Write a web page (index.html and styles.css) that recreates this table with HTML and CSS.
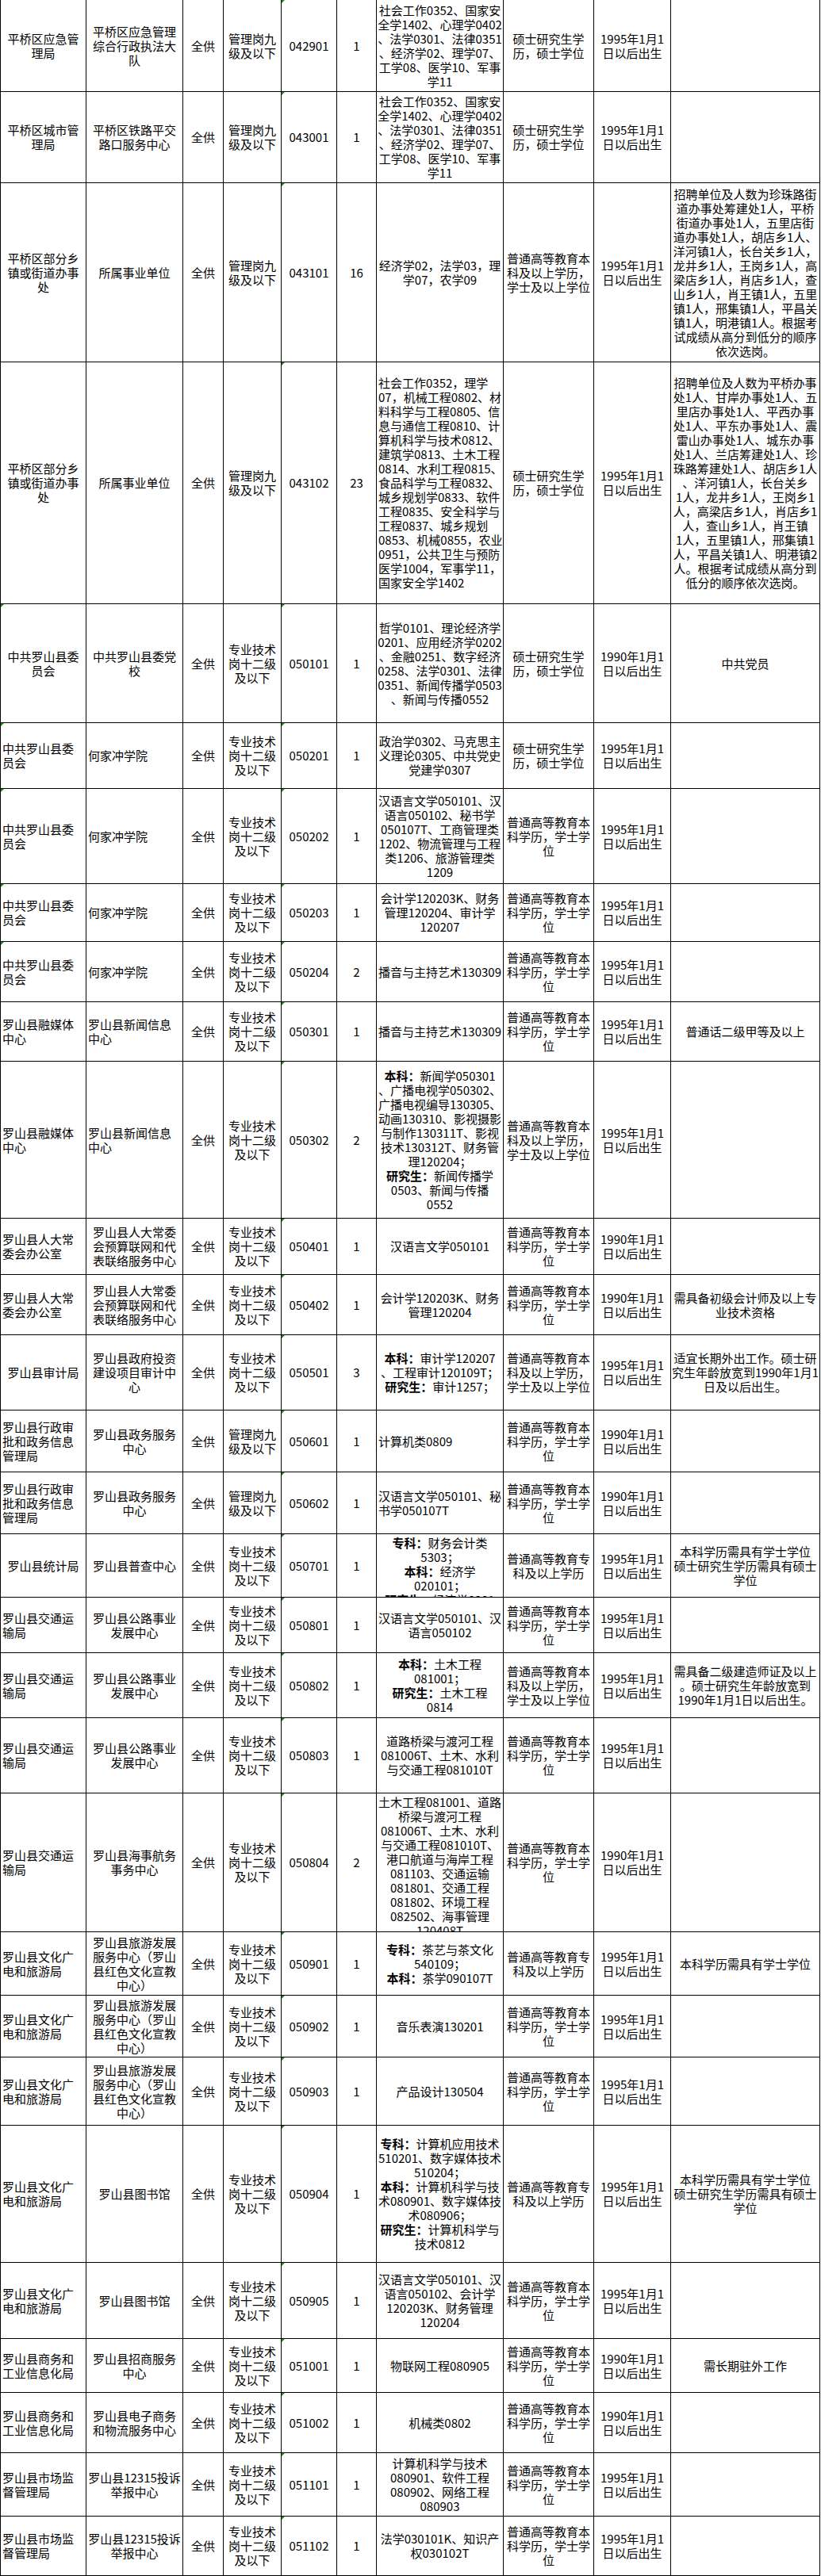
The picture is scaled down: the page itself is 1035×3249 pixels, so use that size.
FILE: index.html
```html
<!DOCTYPE html>
<html lang="zh-CN">
<head>
<meta charset="utf-8">
<title>招聘岗位表</title>
<link rel="stylesheet" href="styles.css">
</head>
<body>
<div class="sheet">

<div class="row h116">
 <div class="c">平桥区应急管<br>理局</div>
 <div class="c">平桥区应急管理<br>综合行政执法大<br>队</div>
 <div class="c">全供</div>
 <div class="c">管理岗九<br>级及以下</div>
 <div class="c g">042901</div>
 <div class="c">1</div>
 <div class="c">社会工作0352、国家安<br>全学1402、心理学0402<br>、法学0301、法律0351<br>、经济学02、理学07、<br>工学08、医学10、军事<br>学11</div>
 <div class="c">硕士研究生学<br>历，硕士学位</div>
 <div class="c">1995年1月1<br>日以后出生</div>
 <div class="c"></div>
</div>

<div class="row h115">
 <div class="c">平桥区城市管<br>理局</div>
 <div class="c">平桥区铁路平交<br>路口服务中心</div>
 <div class="c">全供</div>
 <div class="c">管理岗九<br>级及以下</div>
 <div class="c g">043001</div>
 <div class="c">1</div>
 <div class="c">社会工作0352、国家安<br>全学1402、心理学0402<br>、法学0301、法律0351<br>、经济学02、理学07、<br>工学08、医学10、军事<br>学11</div>
 <div class="c">硕士研究生学<br>历，硕士学位</div>
 <div class="c">1995年1月1<br>日以后出生</div>
 <div class="c"></div>
</div>

<div class="row h226">
 <div class="c">平桥区部分乡<br>镇或街道办事<br>处</div>
 <div class="c">所属事业单位</div>
 <div class="c">全供</div>
 <div class="c">管理岗九<br>级及以下</div>
 <div class="c g">043101</div>
 <div class="c">16</div>
 <div class="c">经济学02，法学03，理<br>学07，农学09</div>
 <div class="c">普通高等教育本<br>科及以上学历，<br>学士及以上学位</div>
 <div class="c">1995年1月1<br>日以后出生</div>
 <div class="c">招聘单位及人数为珍珠路街<br>道办事处筹建处1人，平桥<br>街道办事处1人，五里店街<br>道办事处1人，胡店乡1人、<br>洋河镇1人，长台关乡1人，<br>龙井乡1人，王岗乡1人，高<br>梁店乡1人，肖店乡1人，查<br>山乡1人，肖王镇1人，五里<br>镇1人，邢集镇1人，平昌关<br>镇1人，明港镇1人。根据考<br>试成绩从高分到低分的顺序<br>依次选岗。</div>
</div>

<div class="row h305">
 <div class="c">平桥区部分乡<br>镇或街道办事<br>处</div>
 <div class="c">所属事业单位</div>
 <div class="c">全供</div>
 <div class="c">管理岗九<br>级及以下</div>
 <div class="c g">043102</div>
 <div class="c">23</div>
 <div class="c l">社会工作0352，理学<br>07，机械工程0802、材<br>料科学与工程0805、信<br>息与通信工程0810、计<br>算机科学与技术0812、<br>建筑学0813、土木工程<br>0814、水利工程0815、<br>食品科学与工程0832、<br>城乡规划学0833、软件<br>工程0835、安全科学与<br>工程0837、城乡规划<br>0853、机械0855，农业<br>0951，公共卫生与预防<br>医学1004，军事学11，<br>国家安全学1402</div>
 <div class="c">硕士研究生学<br>历，硕士学位</div>
 <div class="c">1995年1月1<br>日以后出生</div>
 <div class="c">招聘单位及人数为平桥办事<br>处1人、甘岸办事处1人、五<br>里店办事处1人、平西办事<br>处1人、平东办事处1人、震<br>雷山办事处1人、城东办事<br>处1人、兰店筹建处1人、珍<br>珠路筹建处1人、胡店乡1人<br>、洋河镇1人，长台关乡<br>1人，龙井乡1人，王岗乡1<br>人，高梁店乡1人，肖店乡1<br>人，查山乡1人，肖王镇<br>1人，五里镇1人，邢集镇1<br>人，平昌关镇1人、明港镇2<br>人。根据考试成绩从高分到<br>低分的顺序依次选岗。</div>
</div>

<div class="row h150">
 <div class="c g">中共罗山县委<br>员会</div>
 <div class="c">中共罗山县委党<br>校</div>
 <div class="c">全供</div>
 <div class="c">专业技术<br>岗十二级<br>及以下</div>
 <div class="c g">050101</div>
 <div class="c">1</div>
 <div class="c">哲学0101、理论经济学<br>0201、应用经济学0202<br>、金融0251、数字经济<br>0258、法学0301、法律<br>0351、新闻传播学0503<br>、新闻与传播0552</div>
 <div class="c">硕士研究生学<br>历，硕士学位</div>
 <div class="c">1990年1月1<br>日以后出生</div>
 <div class="c">中共党员</div>
</div>

<div class="row h83">
 <div class="c l g">中共罗山县委<br>员会</div>
 <div class="c l">何家冲学院</div>
 <div class="c">全供</div>
 <div class="c">专业技术<br>岗十二级<br>及以下</div>
 <div class="c g">050201</div>
 <div class="c">1</div>
 <div class="c">政治学0302、马克思主<br>义理论0305、中共党史<br>党建学0307</div>
 <div class="c">硕士研究生学<br>历，硕士学位</div>
 <div class="c">1995年1月1<br>日以后出生</div>
 <div class="c"></div>
</div>

<div class="row h120">
 <div class="c l g">中共罗山县委<br>员会</div>
 <div class="c l">何家冲学院</div>
 <div class="c">全供</div>
 <div class="c">专业技术<br>岗十二级<br>及以下</div>
 <div class="c g">050202</div>
 <div class="c">1</div>
 <div class="c">汉语言文学050101、汉<br>语言050102、秘书学<br>050107T、工商管理类<br>1202、物流管理与工程<br>类1206、旅游管理类<br>1209</div>
 <div class="c">普通高等教育本<br>科学历，学士学<br>位</div>
 <div class="c">1995年1月1<br>日以后出生</div>
 <div class="c"></div>
</div>

<div class="row h73">
 <div class="c l g">中共罗山县委<br>员会</div>
 <div class="c l">何家冲学院</div>
 <div class="c">全供</div>
 <div class="c">专业技术<br>岗十二级<br>及以下</div>
 <div class="c g">050203</div>
 <div class="c">1</div>
 <div class="c">会计学120203K、财务<br>管理120204、审计学<br>120207</div>
 <div class="c">普通高等教育本<br>科学历，学士学<br>位</div>
 <div class="c">1995年1月1<br>日以后出生</div>
 <div class="c"></div>
</div>

<div class="row h76">
 <div class="c l g">中共罗山县委<br>员会</div>
 <div class="c l">何家冲学院</div>
 <div class="c">全供</div>
 <div class="c">专业技术<br>岗十二级<br>及以下</div>
 <div class="c g">050204</div>
 <div class="c">2</div>
 <div class="c">播音与主持艺术130309</div>
 <div class="c">普通高等教育本<br>科学历，学士学<br>位</div>
 <div class="c">1995年1月1<br>日以后出生</div>
 <div class="c"></div>
</div>

<div class="row h75">
 <div class="c l">罗山县融媒体<br>中心</div>
 <div class="c l">罗山县新闻信息<br>中心</div>
 <div class="c">全供</div>
 <div class="c">专业技术<br>岗十二级<br>及以下</div>
 <div class="c g">050301</div>
 <div class="c">1</div>
 <div class="c">播音与主持艺术130309</div>
 <div class="c">普通高等教育本<br>科学历，学士学<br>位</div>
 <div class="c">1995年1月1<br>日以后出生</div>
 <div class="c">普通话二级甲等及以上</div>
</div>

<div class="row h198">
 <div class="c l">罗山县融媒体<br>中心</div>
 <div class="c l">罗山县新闻信息<br>中心</div>
 <div class="c">全供</div>
 <div class="c">专业技术<br>岗十二级<br>及以下</div>
 <div class="c g">050302</div>
 <div class="c">2</div>
 <div class="c"><span class="t"><b>本科：</b>新闻学050301<br>、广播电视学050302、<br>广播电视编导130305、<br>动画130310、影视摄影<br>与制作130311T、影视<br>技术130312T、财务管<br>理120204；<br><b>研究生：</b>新闻传播学<br>0503、新闻与传播<br>0552</span></div>
 <div class="c">普通高等教育本<br>科及以上学历，<br>学士及以上学位</div>
 <div class="c">1995年1月1<br>日以后出生</div>
 <div class="c"></div>
</div>

<div class="row h71">
 <div class="c l">罗山县人大常<br>委会办公室</div>
 <div class="c">罗山县人大常委<br>会预算联网和代<br>表联络服务中心</div>
 <div class="c">全供</div>
 <div class="c">专业技术<br>岗十二级<br>及以下</div>
 <div class="c g">050401</div>
 <div class="c">1</div>
 <div class="c">汉语言文学050101</div>
 <div class="c">普通高等教育本<br>科学历，学士学<br>位</div>
 <div class="c">1990年1月1<br>日以后出生</div>
 <div class="c"></div>
</div>

<div class="row h76">
 <div class="c l">罗山县人大常<br>委会办公室</div>
 <div class="c">罗山县人大常委<br>会预算联网和代<br>表联络服务中心</div>
 <div class="c">全供</div>
 <div class="c">专业技术<br>岗十二级<br>及以下</div>
 <div class="c g">050402</div>
 <div class="c">1</div>
 <div class="c">会计学120203K、财务<br>管理120204</div>
 <div class="c">普通高等教育本<br>科学历，学士学<br>位</div>
 <div class="c">1990年1月1<br>日以后出生</div>
 <div class="c">需具备初级会计师及以上专<br>业技术资格</div>
</div>

<div class="row h95">
 <div class="c">罗山县审计局</div>
 <div class="c">罗山县政府投资<br>建设项目审计中<br>心</div>
 <div class="c">全供</div>
 <div class="c">专业技术<br>岗十二级<br>及以下</div>
 <div class="c g">050501</div>
 <div class="c">3</div>
 <div class="c"><span class="t"><b>本科：</b>审计学120207<br>、工程审计120109T；<br><b>研究生：</b>审计1257；</span></div>
 <div class="c">普通高等教育本<br>科及以上学历，<br>学士及以上学位</div>
 <div class="c">1995年1月1<br>日以后出生</div>
 <div class="c">适宜长期外出工作。硕士研<br>究生年龄放宽到1990年1月1<br>日及以后出生。</div>
</div>

<div class="row h78">
 <div class="c l">罗山县行政审<br>批和政务信息<br>管理局</div>
 <div class="c">罗山县政务服务<br>中心</div>
 <div class="c">全供</div>
 <div class="c">管理岗九<br>级及以下</div>
 <div class="c g">050601</div>
 <div class="c">1</div>
 <div class="c l">计算机类0809</div>
 <div class="c">普通高等教育本<br>科学历，学士学<br>位</div>
 <div class="c">1990年1月1<br>日以后出生</div>
 <div class="c"></div>
</div>

<div class="row h78">
 <div class="c l">罗山县行政审<br>批和政务信息<br>管理局</div>
 <div class="c">罗山县政务服务<br>中心</div>
 <div class="c">全供</div>
 <div class="c">管理岗九<br>级及以下</div>
 <div class="c g">050602</div>
 <div class="c">1</div>
 <div class="c l">汉语言文学050101、秘<br>书学050107T</div>
 <div class="c">普通高等教育本<br>科学历，学士学<br>位</div>
 <div class="c">1990年1月1<br>日以后出生</div>
 <div class="c"></div>
</div>

<div class="row h80">
 <div class="c">罗山县统计局</div>
 <div class="c">罗山县普查中心</div>
 <div class="c">全供</div>
 <div class="c">专业技术<br>岗十二级<br>及以下</div>
 <div class="c g">050701</div>
 <div class="c">1</div>
 <div class="c top"><span class="t"><b>专科：</b>财务会计类<br>5303；<br><b>本科：</b>经济学<br>020101；<br><b>研究生：</b>经济学0201</span></div>
 <div class="c">普通高等教育专<br>科及以上学历</div>
 <div class="c">1995年1月1<br>日以后出生</div>
 <div class="c">本科学历需具有学士学位<br>硕士研究生学历需具有硕士<br>学位</div>
</div>

<div class="row h70">
 <div class="c l">罗山县交通运<br>输局</div>
 <div class="c">罗山县公路事业<br>发展中心</div>
 <div class="c">全供</div>
 <div class="c">专业技术<br>岗十二级<br>及以下</div>
 <div class="c g">050801</div>
 <div class="c">1</div>
 <div class="c">汉语言文学050101、汉<br>语言050102</div>
 <div class="c">普通高等教育本<br>科学历，学士学<br>位</div>
 <div class="c">1995年1月1<br>日以后出生</div>
 <div class="c"></div>
</div>

<div class="row h82">
 <div class="c l">罗山县交通运<br>输局</div>
 <div class="c">罗山县公路事业<br>发展中心</div>
 <div class="c">全供</div>
 <div class="c">专业技术<br>岗十二级<br>及以下</div>
 <div class="c g">050802</div>
 <div class="c">1</div>
 <div class="c"><span class="t"><b>本科：</b>土木工程<br>081001；<br><b>研究生：</b>土木工程<br>0814</span></div>
 <div class="c">普通高等教育本<br>科及以上学历，<br>学士及以上学位</div>
 <div class="c">1995年1月1<br>日以后出生</div>
 <div class="c">需具备二级建造师证及以上<br>。硕士研究生年龄放宽到<br>1990年1月1日以后出生。</div>
</div>

<div class="row h95">
 <div class="c l">罗山县交通运<br>输局</div>
 <div class="c">罗山县公路事业<br>发展中心</div>
 <div class="c">全供</div>
 <div class="c">专业技术<br>岗十二级<br>及以下</div>
 <div class="c g">050803</div>
 <div class="c">1</div>
 <div class="c">道路桥梁与渡河工程<br>081006T、土木、水利<br>与交通工程081010T</div>
 <div class="c">普通高等教育本<br>科学历，学士学<br>位</div>
 <div class="c">1995年1月1<br>日以后出生</div>
 <div class="c"></div>
</div>

<div class="row h175">
 <div class="c l">罗山县交通运<br>输局</div>
 <div class="c">罗山县海事航务<br>事务中心</div>
 <div class="c">全供</div>
 <div class="c">专业技术<br>岗十二级<br>及以下</div>
 <div class="c g">050804</div>
 <div class="c">2</div>
 <div class="c top">土木工程081001、道路<br>桥梁与渡河工程<br>081006T、土木、水利<br>与交通工程081010T、<br>港口航道与海岸工程<br>081103、交通运输<br>081801、交通工程<br>081802、环境工程<br>082502、海事管理<br>120408T</div>
 <div class="c">普通高等教育本<br>科学历，学士学<br>位</div>
 <div class="c">1990年1月1<br>日以后出生</div>
 <div class="c"></div>
</div>

<div class="row h80">
 <div class="c l">罗山县文化广<br>电和旅游局</div>
 <div class="c">罗山县旅游发展<br>服务中心（罗山<br>县红色文化宣教<br>中心）</div>
 <div class="c">全供</div>
 <div class="c">专业技术<br>岗十二级<br>及以下</div>
 <div class="c g">050901</div>
 <div class="c">1</div>
 <div class="c"><span class="t"><b>专科：</b>茶艺与茶文化<br>540109；<br><b>本科：</b>茶学090107T</span></div>
 <div class="c">普通高等教育专<br>科及以上学历</div>
 <div class="c">1995年1月1<br>日以后出生</div>
 <div class="c">本科学历需具有学士学位</div>
</div>

<div class="row h78">
 <div class="c l">罗山县文化广<br>电和旅游局</div>
 <div class="c">罗山县旅游发展<br>服务中心（罗山<br>县红色文化宣教<br>中心）</div>
 <div class="c">全供</div>
 <div class="c">专业技术<br>岗十二级<br>及以下</div>
 <div class="c g">050902</div>
 <div class="c">1</div>
 <div class="c">音乐表演130201</div>
 <div class="c">普通高等教育本<br>科学历，学士学<br>位</div>
 <div class="c">1995年1月1<br>日以后出生</div>
 <div class="c"></div>
</div>

<div class="row h86">
 <div class="c l">罗山县文化广<br>电和旅游局</div>
 <div class="c">罗山县旅游发展<br>服务中心（罗山<br>县红色文化宣教<br>中心）</div>
 <div class="c">全供</div>
 <div class="c">专业技术<br>岗十二级<br>及以下</div>
 <div class="c g">050903</div>
 <div class="c">1</div>
 <div class="c">产品设计130504</div>
 <div class="c">普通高等教育本<br>科学历，学士学<br>位</div>
 <div class="c">1995年1月1<br>日以后出生</div>
 <div class="c"></div>
</div>

<div class="row h173">
 <div class="c l">罗山县文化广<br>电和旅游局</div>
 <div class="c">罗山县图书馆</div>
 <div class="c">全供</div>
 <div class="c">专业技术<br>岗十二级<br>及以下</div>
 <div class="c g">050904</div>
 <div class="c">1</div>
 <div class="c"><span class="t"><b>专科：</b>计算机应用技术<br>510201、数字媒体技术<br>510204；<br><b>本科：</b>计算机科学与技<br>术080901、数字媒体技<br>术080906；<br><b>研究生：</b>计算机科学与<br>技术0812</span></div>
 <div class="c">普通高等教育专<br>科及以上学历</div>
 <div class="c">1995年1月1<br>日以后出生</div>
 <div class="c">本科学历需具有学士学位<br>硕士研究生学历需具有硕士<br>学位</div>
</div>

<div class="row h96">
 <div class="c l">罗山县文化广<br>电和旅游局</div>
 <div class="c">罗山县图书馆</div>
 <div class="c">全供</div>
 <div class="c">专业技术<br>岗十二级<br>及以下</div>
 <div class="c g">050905</div>
 <div class="c">1</div>
 <div class="c">汉语言文学050101、汉<br>语言050102、会计学<br>120203K、财务管理<br>120204</div>
 <div class="c">普通高等教育本<br>科学历，学士学<br>位</div>
 <div class="c">1995年1月1<br>日以后出生</div>
 <div class="c"></div>
</div>

<div class="row h68">
 <div class="c l">罗山县商务和<br>工业信息化局</div>
 <div class="c">罗山县招商服务<br>中心</div>
 <div class="c">全供</div>
 <div class="c">专业技术<br>岗十二级<br>及以下</div>
 <div class="c g">051001</div>
 <div class="c">1</div>
 <div class="c">物联网工程080905</div>
 <div class="c">普通高等教育本<br>科学历，学士学<br>位</div>
 <div class="c">1990年1月1<br>日以后出生</div>
 <div class="c">需长期驻外工作</div>
</div>

<div class="row h76">
 <div class="c l">罗山县商务和<br>工业信息化局</div>
 <div class="c">罗山县电子商务<br>和物流服务中心</div>
 <div class="c">全供</div>
 <div class="c">专业技术<br>岗十二级<br>及以下</div>
 <div class="c g">051002</div>
 <div class="c">1</div>
 <div class="c">机械类0802</div>
 <div class="c">普通高等教育本<br>科学历，学士学<br>位</div>
 <div class="c">1990年1月1<br>日以后出生</div>
 <div class="c"></div>
</div>

<div class="row h80">
 <div class="c l">罗山县市场监<br>督管理局</div>
 <div class="c">罗山县12315投诉<br>举报中心</div>
 <div class="c">全供</div>
 <div class="c">专业技术<br>岗十二级<br>及以下</div>
 <div class="c g">051101</div>
 <div class="c">1</div>
 <div class="c">计算机科学与技术<br>080901、软件工程<br>080902、网络工程<br>080903</div>
 <div class="c">普通高等教育本<br>科学历，学士学<br>位</div>
 <div class="c">1995年1月1<br>日以后出生</div>
 <div class="c"></div>
</div>

<div class="row h75">
 <div class="c l">罗山县市场监<br>督管理局</div>
 <div class="c">罗山县12315投诉<br>举报中心</div>
 <div class="c">全供</div>
 <div class="c">专业技术<br>岗十二级<br>及以下</div>
 <div class="c g">051102</div>
 <div class="c">1</div>
 <div class="c">法学030101K、知识产<br>权030102T</div>
 <div class="c">普通高等教育本<br>科学历，学士学<br>位</div>
 <div class="c">1995年1月1<br>日以后出生</div>
 <div class="c"></div>
</div>

</div>
</body>
</html>
```

FILE: styles.css
```css
html, body {
  margin: 0;
  padding: 0;
  background: #ffffff;
}

body {
  font-family: "Noto Sans CJK SC", "Noto Sans", sans-serif;
  font-size: 15px;
  line-height: 18px;
  color: #000000;
}

.sheet {
  width: 1034px;
}

.row {
  display: grid;
  grid-template-columns: 108px 122px 51px 73px 70px 50px 160px 114px 97px 188px;
  grid-template-rows: minmax(0, 1fr);
  width: 1034px;
  box-sizing: border-box;
  border-left: 1px solid #000;
  border-bottom: 1px solid #000;
}

.c {
  position: relative;
  box-sizing: border-box;
  min-width: 0;
  min-height: 0;
  border-right: 1px solid #000;
  padding: 0 2px;
  display: flex;
  align-items: center;
  justify-content: center;
  text-align: center;
  white-space: nowrap;
  overflow: hidden;
}

.t {
  display: block;
}

.c.l {
  justify-content: flex-start;
  text-align: left;
}

.c.top {
  align-items: flex-start;
  padding-top: 2px;
}

.c.g::before {
  content: "";
  position: absolute;
  left: 0;
  top: 0;
  width: 0;
  height: 0;
  border-top: 4px solid #1c8a1c;
  border-right: 4px solid transparent;
}

b {
  font-weight: 700;
}

.h68 { height: 68px; }
.h70 { height: 70px; }
.h71 { height: 71px; }
.h73 { height: 73px; }
.h75 { height: 75px; }
.h76 { height: 76px; }
.h78 { height: 78px; }
.h80 { height: 80px; }
.h82 { height: 82px; }
.h83 { height: 83px; }
.h86 { height: 86px; }
.h95 { height: 95px; }
.h96 { height: 96px; }
.h115 { height: 115px; }
.h116 { height: 116px; }
.h120 { height: 120px; }
.h150 { height: 150px; }
.h173 { height: 173px; }
.h175 { height: 175px; }
.h198 { height: 198px; }
.h226 { height: 226px; }
.h305 { height: 305px; }
```
